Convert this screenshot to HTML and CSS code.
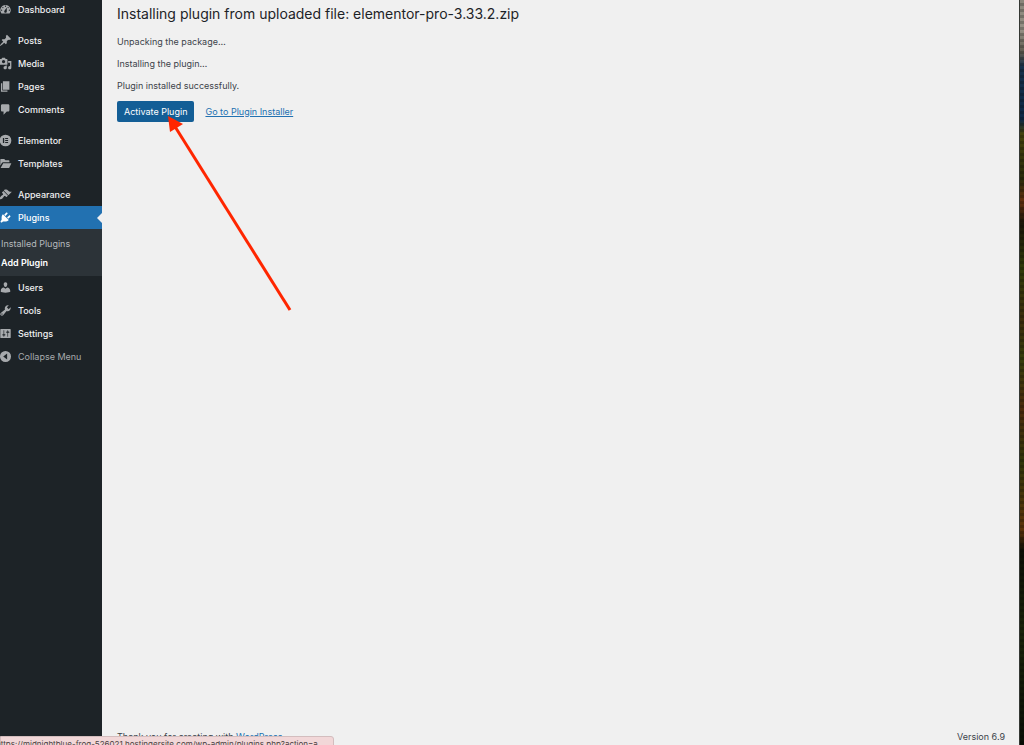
FILE: index.html
```html
<!DOCTYPE html>
<html lang="en">
<head>
<meta charset="utf-8">
<title>Installing plugin</title>
<link rel="stylesheet" href="styles.css">
</head>
<body>
<div class="desktop">
  <nav class="sidebar" aria-label="Main menu">
    <ul class="menu">
      <li><a class="item" href="#"><svg class="icon" viewBox="0 0 20 20"><path fill-rule="evenodd" d="M3.76 16h12.48A7.998 7.998 0 0 0 10 3a7.998 7.998 0 0 0-6.24 13zM10 4c.55 0 1 .45 1 1s-.45 1-1 1-1-.45-1-1 .45-1 1-1zM6 6c.55 0 1 .45 1 1s-.45 1-1 1-1-.45-1-1 .45-1 1-1zm8 0c.55 0 1 .45 1 1s-.45 1-1 1-1-.45-1-1 .45-1 1-1zm-5.37 5.55L12 7v6c0 1.1-.9 2-2 2s-2-.9-2-2c0-.57.24-1.08.63-1.45zM4 10c.55 0 1 .45 1 1s-.45 1-1 1-1-.45-1-1 .45-1 1-1zm12 0c.55 0 1 .45 1 1s-.45 1-1 1-1-.45-1-1 .45-1 1-1z"/></svg>Dashboard</a></li>
      <li class="group"><a class="item" href="#"><svg class="icon" viewBox="0 0 20 20"><path d="M10.44 3.02l1.82-1.82 6.36 6.35-1.83 1.82c-1.05-.68-2.48-.57-3.41.36l-.75.75c-.92.93-1.04 2.35-.35 3.41l-1.83 1.82-2.41-2.41-2.8 2.79c-.42.42-3.38 2.71-3.8 2.29s1.86-3.39 2.28-3.81l2.79-2.79L4.1 9.36l1.83-1.82c1.05.69 2.48.57 3.4-.36l.75-.75c.93-.92 1.05-2.35.36-3.41z"/></svg>Posts</a></li>
      <li><a class="item" href="#"><svg class="icon" viewBox="0 0 20 20"><path fill-rule="evenodd" d="M13 11V4c0-.55-.45-1-1-1h-1.67L9 1H5L3.67 3H2c-.55 0-1 .45-1 1v7c0 .55.45 1 1 1h10c.55 0 1-.45 1-1zM7 4.5c1.38 0 2.5 1.12 2.5 2.5S8.38 9.5 7 9.5 4.5 8.38 4.5 7 5.62 4.5 7 4.5zM14 6h5v10.5c0 1.38-1.12 2.5-2.5 2.5S14 17.88 14 16.5s1.12-2.5 2.5-2.5c.17 0 .34.02.5.05V9h-3V6zm-4 8.05V13h2v3.5c0 1.38-1.12 2.5-2.5 2.5S7 17.88 7 16.5 8.12 14 9.5 14c.17 0 .34.02.5.05z"/></svg>Media</a></li>
      <li><a class="item" href="#"><svg class="icon" viewBox="0 0 20 20"><path d="M6 15V2h10v13H6zm-1 1h8v2H3V5h2v11z"/></svg>Pages</a></li>
      <li><a class="item" href="#"><svg class="icon" viewBox="0 0 20 20"><path d="M5 2h9c1.1 0 2 .9 2 2v7c0 1.1-.9 2-2 2h-2l-5 5v-5H5c-1.1 0-2-.9-2-2V4c0-1.1.9-2 2-2z"/></svg>Comments</a></li>
      <li class="group"><a class="item" href="#"><svg class="icon" viewBox="0 0 20 20"><path fill-rule="evenodd" d="M10 1a9 9 0 1 0 0 18 9 9 0 0 0 0-18zM6 6h2v8H6zM9.500 6H14v1.700H9.500zM9.500 9.150H14v1.700H9.500zM9.500 12.300H14V14H9.500z"/></svg>Elementor</a></li>
      <li><a class="item" href="#"><svg class="icon" viewBox="0 0 20 20"><path d="M2 4c0-.6.4-1 1-1h5l2 2h5c.6 0 1 .4 1 1v2H6.500c-.9 0-1.700.5-2.100 1.300L2 13.500zM6.500 9.500H19l-3 6.500c-.2.600-.800 1-1.500 1H2.500z"/></svg>Templates</a></li>
      <li class="group"><a class="item" href="#"><svg class="icon" viewBox="0 0 20 20"><path d="M14.48 11.06L7.41 3.99l1.5-1.5c.5-.56 2.3-.47 3.51.32 1.21.8 1.43 1.28 2.91 2.1 1.18.64 2.45 1.26 4.45.85zm-.71.71L6.7 4.7 4.93 6.47c-.39.39-.39 1.02 0 1.41l1.06 1.06c.39.39.39 1.03 0 1.42-.6.6-1.43 1.11-2.21 1.69-.35.26-.7.53-1.01.84C1.43 14.23.4 16.08 1.4 17.07c.99 1 2.84-.03 4.18-1.36.31-.31.58-.66.85-1.02.57-.78 1.08-1.61 1.69-2.21.39-.39 1.02-.39 1.41 0l1.06 1.06c.39.39 1.02.39 1.41 0z"/></svg>Appearance</a></li>
      <li>
        <a class="item current" href="#"><svg class="icon" viewBox="0 0 20 20"><path d="M13.11 4.36L9.87 7.6 8 5.73l3.24-3.24c.35-.34 1.05-.2 1.56.32.52.51.66 1.21.31 1.55zm-8 1.77l.91-1.12 9.01 9.01-1.19.84c-.71.71-2.63 1.16-3.82 1.16H6.14L4.9 17.26c-.59.59-1.54.59-2.12 0-.59-.58-.59-1.53 0-2.12l1.24-1.24v-3.88c0-1.13.4-3.19 1.09-3.89zm7.26 3.97l3.24-3.24c.34-.35 1.04-.21 1.55.31.52.51.66 1.21.31 1.55l-3.24 3.25z"/></svg>Plugins</a>
        <ul class="submenu">
          <li><a class="subitem" href="#">Installed Plugins</a></li>
          <li><a class="subitem selected" href="#">Add Plugin</a></li>
        </ul>
      </li>
      <li><a class="item" href="#"><svg class="icon" viewBox="0 0 20 20"><path d="M10 9.25c-2.27 0-2.73-3.44-2.73-3.44C7 4.02 7.82 2 9.97 2c2.16 0 2.98 2.02 2.71 3.81 0 0-.41 3.44-2.68 3.44zm0 2.57L12.72 10c2.39 0 4.52 2.33 4.52 4.53v2.49s-3.65 1.13-7.24 1.13c-3.65 0-7.24-1.13-7.24-1.13v-2.49c0-2.25 1.94-4.48 4.47-4.48z"/></svg>Users</a></li>
      <li><a class="item" href="#"><svg class="icon" viewBox="0 0 20 20"><path fill-rule="evenodd" d="M16.68 9.77c-1.34 1.34-3.3 1.67-4.95.99l-5.41 6.52c-.99.99-2.59.99-3.58 0s-.99-2.59 0-3.57l6.52-5.42c-.68-1.65-.35-3.61.99-4.95 1.28-1.28 3.12-1.62 4.72-1.06l-2.89 2.89 2.82 2.82 2.86-2.87c.53 1.58.18 3.39-1.08 4.65zM3.81 16.21c.4.39 1.04.39 1.43 0 .4-.4.4-1.04 0-1.43-.39-.4-1.03-.4-1.43 0-.39.39-.39 1.03 0 1.43z"/></svg>Tools</a></li>
      <li><a class="item" href="#"><svg class="icon" viewBox="0 0 20 20"><path fill-rule="evenodd" d="M18 16V4c0-.55-.45-1-1-1H3c-.55 0-1 .45-1 1v12c0 .55.45 1 1 1h14c.55 0 1-.45 1-1zM8 11h1c.55 0 1 .45 1 1s-.45 1-1 1H8v1.5c0 .28-.22.5-.5.5s-.5-.22-.5-.5V13H6c-.55 0-1-.45-1-1s.45-1 1-1h1V5.5c0-.28.22-.5.5-.5s.5.22.5.5V11zm5-2h-1c-.55 0-1-.45-1-1s.45-1 1-1h1V5.5c0-.28.22-.5.5-.5s.5.22.5.5V7h1c.55 0 1 .45 1 1s-.45 1-1 1h-1v5.5c0 .28-.22.5-.5.5s-.5-.22-.5-.5V9z"/></svg>Settings</a></li>
      <li><button class="item collapse" type="button"><svg class="icon" viewBox="0 0 20 20"><path fill-rule="evenodd" d="M10 1.500a8.500 8.500 0 1 0 0 17 8.500 8.500 0 0 0 0-17zM12.500 5.500v9L6.500 10z"/></svg>Collapse Menu</button></li>
    </ul>
  </nav>
  <div class="page">
    <main class="content">
      <h1 class="title">Installing plugin from uploaded file: elementor-pro-3.33.2.zip</h1>
      <p class="step">Unpacking the package…</p>
      <p class="step">Installing the plugin…</p>
      <p class="step">Plugin installed successfully.</p>
      <div class="actions">
        <button class="activate" type="button">Activate Plugin</button>
        <a class="link" href="#">Go to Plugin Installer</a>
        <svg class="arrow" viewBox="0 0 124 196" aria-hidden="true"><path class="shaft" d="M6 9L122 194"/><path class="head" d="M0 0L15 8L2 16z"/></svg>
      </div>
    </main>
    <footer class="footer">
      <span>Thank you for creating with <a class="link" href="#">WordPress</a>.</span>
      <span>Version 6.9</span>
    </footer>
  </div>
  <div class="wallpaper"></div>
  <div class="status"><span>https://midnightblue-frog-526021.hostingersite.com/wp-admin/plugins.php?action=a</span></div>
</div>
</body>
</html>
```
FILE: styles.css
```css
* {
  box-sizing: border-box;
}

body {
  margin: 0;
  font-family: Inter, "Liberation Sans", sans-serif;
  font-size: 9px;
  line-height: 14px;
  color: #3c434a;
  background: #f0f0f1;
}

ul {
  list-style: none;
  margin: 0;
  padding: 0;
}

.desktop {
  position: relative;
  display: flex;
  height: 100vh;
  overflow: hidden;
}

.sidebar {
  flex: 0 0 102px;
  background: #1d2327;
}

.menu {
  margin-top: -2px;
}

.group {
  margin-top: 8px;
}

.item {
  position: relative;
  display: flex;
  align-items: center;
  gap: 6px;
  width: 100%;
  height: 23px;
  padding: 0;
  border: 0;
  background: none;
  font: inherit;
  font-weight: 500;
  color: #f0f0f1;
  text-decoration: none;
}

.icon {
  flex: none;
  width: 13px;
  height: 13px;
  margin-left: -1px;
  fill: #a7aaad;
}

.current {
  background: #2271b1;
  color: #fff;
}

.current .icon {
  fill: #fff;
}

.current::after {
  content: "";
  position: absolute;
  right: 0;
  border: 5px solid transparent;
  border-right-color: #f0f0f1;
  border-left: 0;
}

.submenu {
  padding: 5px 0 4px;
  background: #2c3338;
}

.subitem {
  display: block;
  padding: 3px 1px 2px;
  color: #b5b9bd;
  text-decoration: none;
}

.selected {
  color: #fff;
  font-weight: 600;
}

.collapse {
  color: #a7aaad;
  font-weight: 400;
}

.page {
  flex: 1;
  display: flex;
  flex-direction: column;
  padding: 4px 14px 1px 15px;
  background: #f0f0f0;
}

.content {
  flex: 1;
}

.title {
  margin: 0 0 11px;
  font-size: 14px;
  line-height: 20px;
  font-weight: 400;
  color: #1d2327;
}

.step {
  margin: 0 0 8px;
}

.actions {
  position: relative;
  display: flex;
  align-items: center;
  gap: 11px;
}

.activate {
  height: 21px;
  padding: 0 7px;
  border: 0;
  border-radius: 2px;
  background: #135e96;
  color: #fff;
  font: inherit;
}

.link {
  color: #2271b1;
}

.arrow {
  position: absolute;
  left: 51px;
  top: 15px;
  width: 124px;
  height: 196px;
}

.shaft {
  fill: none;
  stroke: #ff2600;
  stroke-width: 3;
}

.head {
  fill: #ff2600;
}

.footer {
  display: flex;
  justify-content: space-between;
}

.wallpaper {
  flex: 0 0 5px;
  border-left: 1px solid #343833;
  background:
    repeating-linear-gradient(transparent 0 3px, rgba(0, 0, 0, 0.2) 3px 6px),
    linear-gradient(#8a857b 0, #969085 4%, #5f5b50 7%, #17304a 9%, #0d2745 16%, #45430d 18%, #292b0b 24%, #63300f 27%, #1a1709 30%, #303a09 36%, #3d2d0c 43%, #353c0b 48%, #4c2b0c 55%, #303509 62%, #5c340b 71%, #0c1006 74%, #192309 85%, #090f06 100%);
}

.status {
  position: absolute;
  left: 0;
  top: calc(100% - 9px);
  width: 334px;
  height: 16px;
  border: 1px solid #d3bdbe;
  border-radius: 0 3px 0 0;
  background: #f2d7d8;
  color: #4c3e42;
  font-size: 8px;
  white-space: nowrap;
}

.status span {
  margin-left: -5px;
}
```
